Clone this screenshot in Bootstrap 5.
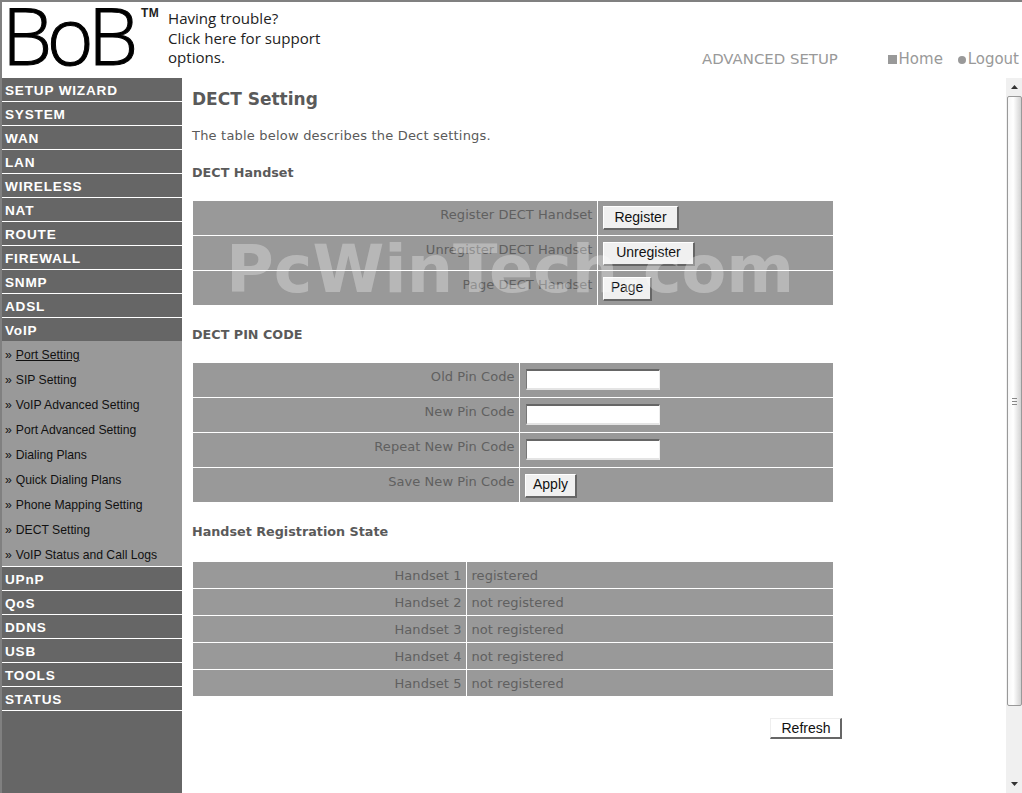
<!DOCTYPE html>
<html lang="en">
<head>
<meta charset="utf-8">
<title>DECT Setting</title>
<link rel="stylesheet" href="https://cdn.jsdelivr.net/npm/bootstrap@5.3.0/dist/css/bootstrap.min.css">
<style>
html,body{height:793px;overflow:hidden;background:#fff}
body{font-family:"DejaVu Sans",sans-serif;color:#555;position:relative}
.page-frame{height:793px;border-top:2px solid #808080;border-left:2px solid #808080;display:flex;flex-direction:column}
.top-head{height:76px;flex:none}
.brand-word{font-family:"Open Sans",sans-serif;font-weight:300;font-size:80px;line-height:64px;letter-spacing:-5.5px;color:#000;margin-left:0;width:139px;-webkit-text-stroke:1px #000;white-space:nowrap;height:76px;overflow:visible}
.brand-tm{font-family:"Liberation Sans",sans-serif;font-weight:700;font-size:12px;line-height:1;color:#222;margin:5px 0 0 0;width:27px;letter-spacing:.5px}
.help-text{font-family:"Open Sans",sans-serif;font-size:15.1px;line-height:19.5px;color:#222;margin:7px 0 0 0;width:200px;text-decoration:none;display:block}
.top-links{color:#999;margin-left:auto;padding-top:47px;padding-right:3px;font-size:15px;line-height:20px;white-space:nowrap}
.adv-label{font-size:14.9px;margin-right:45px}
.top-link{color:#999;text-decoration:none;font-size:15px}
.sq{display:inline-block;width:9px;height:9px;background:#999;margin-right:2px}
.dot{display:inline-block;width:8px;height:8px;background:#999;border-radius:50%;margin:0 2px 0 10px}
.body-row{flex:1;min-height:0}
.side-nav{width:180px;flex:none;background:#666;font-family:"Liberation Sans",sans-serif}
.nav-head{display:block;height:24px;line-height:25px;padding-left:3px;color:#fff;font-weight:700;font-size:13.6px;letter-spacing:.8px;border-bottom:1px solid #fff;text-decoration:none}
.nav-open{height:23px;border-bottom:0}
.nav-sub{background:#999;border-bottom:1px solid #fff;padding-top:1px}
.nav-sub a{display:block;height:25px;line-height:26px;padding-left:3px;color:#111;font-size:12.2px;text-decoration:none;white-space:nowrap}
.nav-sub a:last-child{height:24px}
.nav-sub a span{margin-left:4px}
.nav-sub a.cur span{text-decoration:underline}
.main-pane{flex:1;padding:0 10px;min-width:0}
.pg-title{font-size:17px;font-weight:700;line-height:20px;margin:11px 0 0;color:#5a5a5a}
.pg-desc{font-size:13px;line-height:16px;margin:19px 0 0;color:#5a5a5a;letter-spacing:.2px}
.sec-title{font-size:12.75px;font-weight:700;line-height:16px;margin:0;color:#5a5a5a}
.grid-tbl{width:640px;margin-left:1px;background:#999;table-layout:fixed;font-size:13px;color:#606060;letter-spacing:.05px}
.grid-tbl td{border-bottom:1px solid #fff;border-left:1px solid #fff;vertical-align:top;padding:0 5px}
.grid-tbl tr:last-child td{border-bottom:0}
.grid-tbl td:first-child{border-left:0;text-align:right;padding-right:4px}
.rows-big td{height:35px}
.rows-big tr:first-child td{height:34px}
.rows-big tr:last-child td{height:35px}
.rows-big .lbl{padding-top:5px;line-height:17px}
.rows-big .ctl{padding-top:5px}
.rows-big tr + tr .old-btn{margin-top:1px}
.rows-small td{height:27px;line-height:25px;padding-top:1px}
.rows-small tr:first-child td{height:26px}
.rows-small tr:last-child td{height:26px}
.old-btn{font-family:"Liberation Sans",sans-serif;font-size:14px;line-height:16px;height:24px;padding:0 0 2px 1px;background:#f0f0f0;color:#111;border:1px solid;border-color:#fff #666 #666 #fff;border-width:1px 2px 2px 1px;display:block}
.old-input{display:block;width:134px;height:21px;margin:1px 0 0 1px;background:#fff;border:1px solid;border-width:2px 1px 2px 1px;border-color:#666 #eee #e4e4e4 #777;padding:0}
.tbl-one{margin-top:20px}
.refresh-row{width:650px;margin-top:22px;display:flex;justify-content:flex-end}
.refresh-btn{width:72px;height:21px;background:#fff;line-height:15px;padding-bottom:0;border-color:#eee #666 #666 #eee}
.scroll-col{width:16px;flex:none;background:#f0f0f0;display:flex;flex-direction:column}
.scroll-btn{height:18px;flex:none;display:flex;align-items:center;justify-content:center}
.scroll-thumb{height:610px;flex:none;margin:0 0 0 1px;width:15px;background:linear-gradient(90deg,#f6f6f6,#fff 40%,#d2d2d2);border:1px solid #999;border-radius:2px;display:flex;align-items:center;justify-content:center}
.grip{width:5px;height:7px;border-top:1px solid #888;border-bottom:1px solid #888}
.grip::after{content:"";display:block;height:1px;background:#888;margin-top:2px}
.wm-text{position:absolute;left:226px;top:227px;font-family:"DejaVu Sans",sans-serif;font-weight:700;font-size:65.2px;line-height:84px;color:rgba(255,255,255,.3);white-space:nowrap;pointer-events:none}
</style>
</head>
<body>
<div class="page-frame">
  <header class="top-head d-flex">
    <div class="brand-word">BoB</div>
    <div class="brand-tm">TM</div>
    <a class="help-text" href="#">Having trouble?<br>Click here for support<br>options.</a>
    <div class="top-links">
      <span class="adv-label">ADVANCED SETUP</span>
      <a class="top-link" href="#"><span class="sq"></span>Home</a>
      <a class="top-link" href="#"><span class="dot"></span>Logout</a>
    </div>
  </header>
  <div class="body-row d-flex">
    <nav class="side-nav">
      <a class="nav-head" href="#">SETUP WIZARD</a>
      <a class="nav-head" href="#">SYSTEM</a>
      <a class="nav-head" href="#">WAN</a>
      <a class="nav-head" href="#">LAN</a>
      <a class="nav-head" href="#">WIRELESS</a>
      <a class="nav-head" href="#">NAT</a>
      <a class="nav-head" href="#">ROUTE</a>
      <a class="nav-head" href="#">FIREWALL</a>
      <a class="nav-head" href="#">SNMP</a>
      <a class="nav-head" href="#">ADSL</a>
      <a class="nav-head nav-open" href="#">VoIP</a>
      <div class="nav-sub">
        <a class="cur" href="#">»<span>Port Setting</span></a>
        <a href="#">»<span>SIP Setting</span></a>
        <a href="#">»<span>VoIP Advanced Setting</span></a>
        <a href="#">»<span>Port Advanced Setting</span></a>
        <a href="#">»<span>Dialing Plans</span></a>
        <a href="#">»<span>Quick Dialing Plans</span></a>
        <a href="#">»<span>Phone Mapping Setting</span></a>
        <a href="#">»<span>DECT Setting</span></a>
        <a href="#">»<span>VoIP Status and Call Logs</span></a>
      </div>
      <a class="nav-head" href="#">UPnP</a>
      <a class="nav-head" href="#">QoS</a>
      <a class="nav-head" href="#">DDNS</a>
      <a class="nav-head" href="#">USB</a>
      <a class="nav-head" href="#">TOOLS</a>
      <a class="nav-head" href="#">STATUS</a>
    </nav>
    <main class="main-pane">
      <h1 class="pg-title">DECT Setting</h1>
      <p class="pg-desc">The table below describes the Dect settings.</p>
      <h2 class="sec-title" style="margin-top:21px">DECT Handset</h2>
      <table class="grid-tbl rows-big tbl-one">
        <colgroup><col style="width:404px"><col></colgroup>
        <tr><td class="lbl">Register DECT Handset</td><td class="ctl"><button class="old-btn" style="width:76px">Register</button></td></tr>
        <tr><td class="lbl">Unregister DECT Handset</td><td class="ctl"><button class="old-btn" style="width:92px">Unregister</button></td></tr>
        <tr><td class="lbl">Page DECT Handset</td><td class="ctl"><button class="old-btn" style="width:49px">Page</button></td></tr>
      </table>
      <h2 class="sec-title" style="margin-top:22px">DECT PIN CODE</h2>
      <table class="grid-tbl rows-big" style="margin-top:20px">
        <colgroup><col style="width:326px"><col></colgroup>
        <tr><td class="lbl">Old Pin Code</td><td class="ctl"><input class="old-input" type="text"></td></tr>
        <tr><td class="lbl">New Pin Code</td><td class="ctl"><input class="old-input" type="text"></td></tr>
        <tr><td class="lbl">Repeat New Pin Code</td><td class="ctl"><input class="old-input" type="text"></td></tr>
        <tr><td class="lbl">Save New Pin Code</td><td class="ctl"><button class="old-btn" style="width:52px">Apply</button></td></tr>
      </table>
      <h2 class="sec-title" style="margin-top:22px">Handset Registration State</h2>
      <table class="grid-tbl rows-small" style="margin-top:22px">
        <colgroup><col style="width:273px"><col></colgroup>
        <tr><td>Handset 1</td><td>registered</td></tr>
        <tr><td>Handset 2</td><td>not registered</td></tr>
        <tr><td>Handset 3</td><td>not registered</td></tr>
        <tr><td>Handset 4</td><td>not registered</td></tr>
        <tr><td>Handset 5</td><td>not registered</td></tr>
      </table>
      <div class="refresh-row"><button class="old-btn refresh-btn">Refresh</button></div>
    </main>
    <div class="scroll-col">
      <div class="scroll-btn"><svg width="7" height="4" viewBox="0 0 7 4"><path d="M3.5 0 7 4H0z" fill="#333"/></svg></div>
      <div class="scroll-thumb"><div class="grip"></div></div>
      <div class="flex-grow-1"></div>
      <div class="scroll-btn"><svg width="7" height="4" viewBox="0 0 7 4"><path d="M0 0h7L3.5 4z" fill="#333"/></svg></div>
    </div>
  </div>
</div>
<div class="wm-text">PcWinTech.com</div>
<script src="https://cdn.jsdelivr.net/npm/bootstrap@5.3.0/dist/js/bootstrap.bundle.min.js"></script>
</body>
</html>
